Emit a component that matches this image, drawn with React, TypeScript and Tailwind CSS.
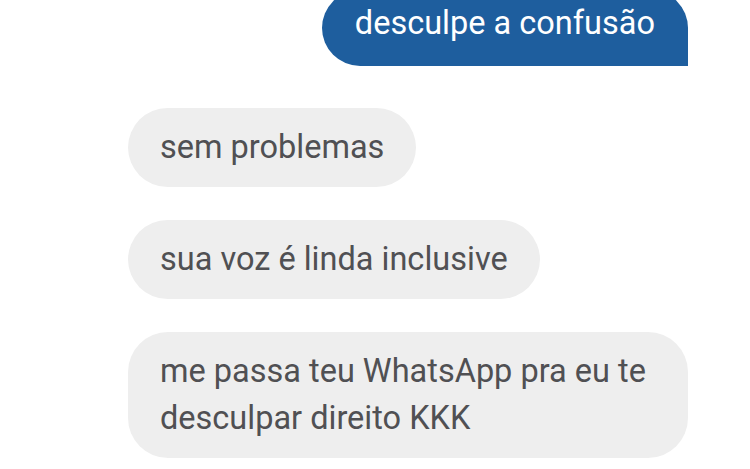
const messages = [
  { id: 1, text: 'sem problemas' },
  { id: 2, text: 'sua voz é linda inclusive' },
  { id: 3, text: 'me passa teu WhatsApp pra eu te desculpar direito KKK' },
];

export default function App() {
  return (
    <div
      className="h-[469px] w-[750px] overflow-hidden bg-white"
      style={{ fontFamily: 'Roboto, "Liberation Sans", sans-serif' }}
    >
      <div className="-mt-[10px] flex flex-col pl-[128px] pr-[62px]">
        <div className="flex justify-end">
          <div className="rounded-l-[38px] rounded-tr-[38px] bg-[#1e5e9e] px-[33px] pt-[10px] pb-[19px] text-[32.5px] leading-[47px] text-white">
            desculpe a confusão
          </div>
        </div>
        <div className="mt-[42px] flex flex-col items-start gap-[33px]">
          {messages.map((m) => (
            <div
              key={m.id}
              className="max-w-[560px] rounded-[40px] bg-[#eeeeee] px-[32px] py-[16px] text-[32.5px] leading-[47px] text-[#505053]"
            >
              {m.text}
            </div>
          ))}
        </div>
      </div>
    </div>
  );
}
